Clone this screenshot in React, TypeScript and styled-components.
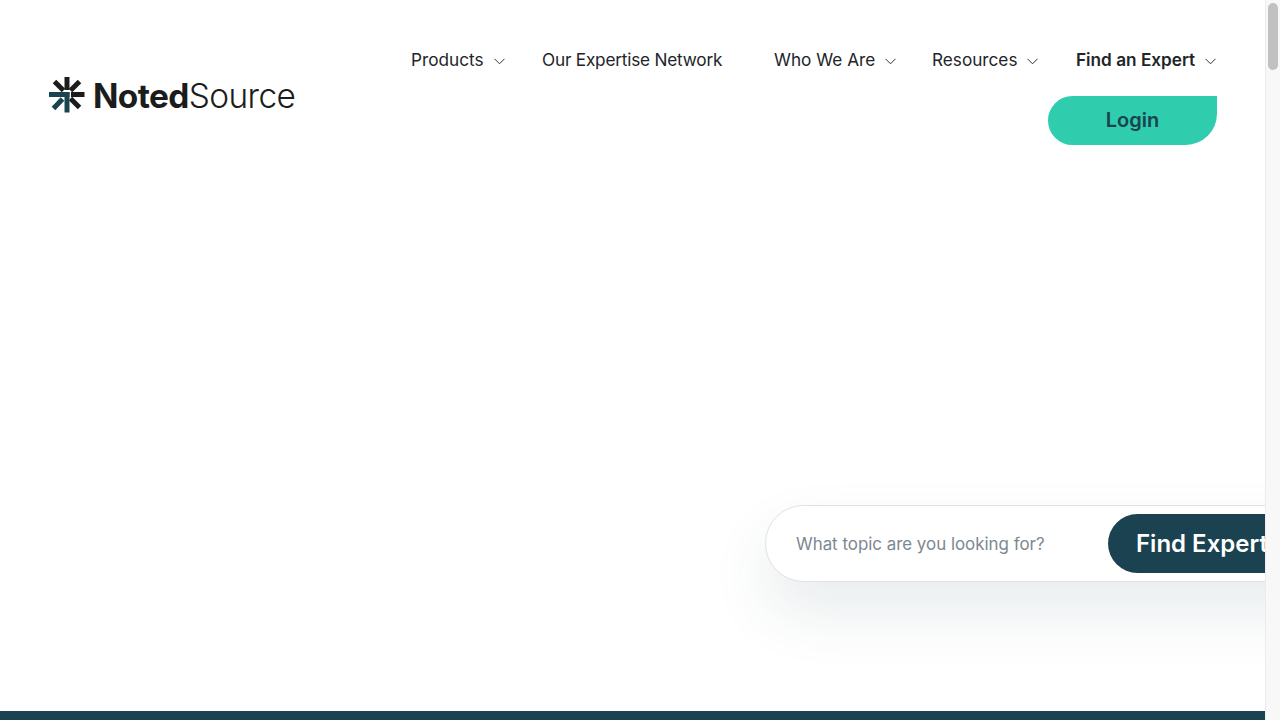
import React, { FC } from 'react'
import styled, { createGlobalStyle } from 'styled-components'

const GlobalStyle = createGlobalStyle`
  html, body {
    margin: 0;
    padding: 0;
    height: 100%;
    overflow: hidden;
    background: #fff;
  }
  * {
    box-sizing: border-box;
  }
`

const navItems = [
  { label: 'Products', hasMenu: true },
  { label: 'Our Expertise Network', hasMenu: false, tight: true },
  { label: 'Who We Are', hasMenu: true },
  { label: 'Resources', hasMenu: true },
  { label: 'Find an Expert', hasMenu: true, strong: true },
]

const Logo: FC = () => (
  <LogoWrap>
    <svg width="36" height="36" viewBox="0 0 36 36" aria-hidden="true">
      <g stroke="#1c1c1c" strokeWidth="5" fill="none">
        <path d="M18 0v13" />
        <path d="M5.500 4.500l9 9" />
        <path d="M30.500 4.500l-9 9" />
        <path d="M22 17.500h13.500" />
        <path d="M21.500 21.500l9 9" />
      </g>
      <g stroke="#1a4250" strokeWidth="5" fill="none">
        <path d="M0 17.500h20.500" />
        <path d="M18 15v20.500" />
        <path d="M13.500 22l-9 9.500" />
      </g>
    </svg>
    <LogoText>
      <b>Noted</b>Source
    </LogoText>
  </LogoWrap>
)

const Chevron: FC = () => (
  <ChevronIcon width="11" height="7" viewBox="0 0 11 7" aria-hidden="true">
    <path d="M.5.8l5 5 5-5" fill="none" stroke="#333" strokeWidth="1" />
  </ChevronIcon>
)

export default function App() {
  return (
    <Viewport>
      <GlobalStyle />
      <Page>
        <Header>
          <Logo />
          <Nav>
            <NavRow>
              {navItems.map((item) => (
                <NavItem key={item.label} $strong={item.strong} $tight={item.tight}>
                  {item.label}
                  {item.hasMenu && <Chevron />}
                </NavItem>
              ))}
            </NavRow>
            <LoginButton>Login</LoginButton>
          </Nav>
        </Header>
        <Hero>
          <SearchBox>
            <SearchInput placeholder="What topic are you looking for?" />
            <FindButton>Find Experts</FindButton>
          </SearchBox>
        </Hero>
        <BottomBand />
      </Page>
      <ScrollTrack>
        <ScrollThumb />
      </ScrollTrack>
    </Viewport>
  )
}

const Viewport = styled.div`
  display: flex;
  width: 1280px;
  height: 720px;
  overflow: hidden;
  font-family: Inter, 'Noto Sans', sans-serif;
`

const Page = styled.div`
  width: 1265px;
  height: 720px;
  display: flex;
  flex-direction: column;
  overflow: hidden;
`

const Header = styled.header`
  display: flex;
  justify-content: space-between;
  align-items: flex-start;
  padding: 44px 48px 0 49px;
`

const LogoWrap = styled.div`
  display: flex;
  align-items: center;
  gap: 8px;
  height: 36px;
  margin-top: 33px;
`

const LogoText = styled.div`
  padding-top: 2px;
  font-size: 33.4px;
  line-height: 36px;
  font-weight: 300;
  letter-spacing: -0.6px;
  color: #1c1c1c;
  b {
    font-weight: 700;
  }
`

const Nav = styled.nav`
  display: flex;
  flex-direction: column;
  align-items: flex-end;
`

const NavRow = styled.div`
  display: grid;
  grid-template-columns: 131px 232px 158px 144px 141px;
  height: 52px;
`

const NavItem = styled.div<{ $strong?: boolean; $tight?: boolean }>`
  display: flex;
  align-items: flex-start;
  height: 32px;
  line-height: 32px;
  font-size: 17.2px;
  font-weight: ${(p) => (p.$strong ? 600 : 400)};
  letter-spacing: ${(p) => (p.$tight ? '-0.2px' : '0')};
  color: #212529;
  white-space: nowrap;
`

const ChevronIcon = styled.svg`
  margin: 14px 0 0 10px;
`

const LoginButton = styled.button`
  width: 169px;
  height: 49px;
  border: none;
  padding: 0 0 2px;
  background: #2fcdad;
  color: #1a4250;
  font-family: inherit;
  font-size: 20px;
  font-weight: 600;
  border-radius: 25px 0 32px 25px;
`

const Hero = styled.main`
  flex: 1;
  display: flex;
  align-items: flex-start;
  padding: 360px 0 0 765px;
  min-height: 0;
`

const SearchBox = styled.div`
  flex: none;
  width: 640px;
  height: 77px;
  display: flex;
  align-items: center;
  padding: 0 0 0 30px;
  background: #fff;
  border: 1px solid #dfe1e3;
  border-radius: 39px;
  box-shadow: 0 30px 60px rgba(26, 66, 80, 0.1);
`

const SearchInput = styled.input`
  width: 312px;
  border: none;
  outline: none;
  padding: 0;
  font-family: inherit;
  font-size: 16.9px;
  color: #6c757d;
  &::placeholder {
    color: #7d8790;
    opacity: 1;
  }
`

const FindButton = styled.button`
  width: 200px;
  height: 59px;
  border: none;
  padding: 0 0 0 28px;
  text-align: left;
  background: #1a4250;
  color: #fff;
  font-family: inherit;
  font-size: 24px;
  font-weight: 600;
  white-space: nowrap;
  border-radius: 30px;
`

const BottomBand = styled.div`
  flex: none;
  height: 9px;
  background: #1a4250;
`

const ScrollTrack = styled.div`
  flex: none;
  width: 15px;
  height: 720px;
  padding: 3px 2px 0 3px;
  background: #f8f8f8;
  border-left: 1px solid #ececec;
`

const ScrollThumb = styled.div`
  width: 10px;
  height: 67px;
  margin-left: -1px;
  background: #c1c1c1;
  border-radius: 5px;
`
